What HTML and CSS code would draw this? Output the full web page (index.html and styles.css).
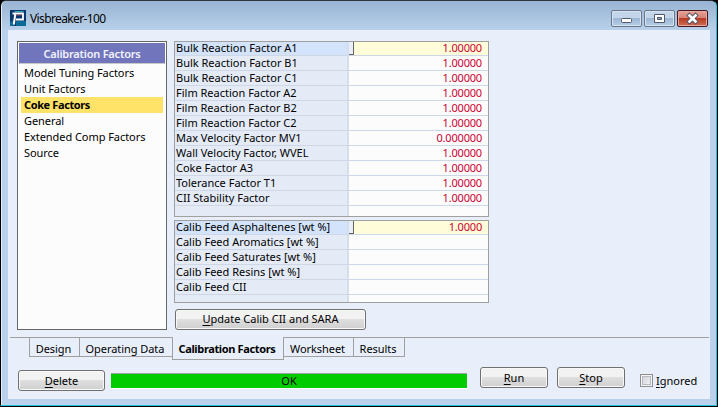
FILE: index.html
```html
<!DOCTYPE html>
<html lang="en">
<head>
<meta charset="utf-8">
<title>Visbreaker-100</title>
<link rel="stylesheet" href="styles.css">
</head>
<body>
<div class="window">
  <header class="titlebar">
    <svg class="logo" width="16" height="16" viewBox="0 0 16 16"><rect width="16" height="16" fill="#0c356c"/><path d="M0 12l4-2v6H0zM6 11h10v5H6z" fill="#0b6a98"/><path d="M4.500 1.500h9" stroke="#36a7b5"/><path d="M2.500 3.500h10.500v6H6" fill="none" stroke="#fff" stroke-width="1.800"/><path d="M5.300 4L3.800 14.500" stroke="#fff" stroke-width="2"/><path d="M6.500 5h5" stroke="#bd4c5a" stroke-width=".8"/></svg>
    <h1>Visbreaker-100</h1>
    <div class="controls">
      <span class="ctl"><svg width="29" height="15"><rect x="9.500" y="7.500" width="10" height="4" rx="1" fill="#fff" stroke="#535666"/></svg></span>
      <span class="ctl"><svg width="29" height="15"><path d="M9.500 3.500h10v8h-10z" fill="#fff" stroke="#535666"/><path d="M12.500 6.500h4v2h-4z" fill="#8faac8" stroke="#535666"/></svg></span>
      <span class="ctl close"><svg width="29" height="15"><path d="M11.500 4.500l6 6M17.500 4.500l-6 6" stroke="#535666" stroke-width="4.500" stroke-linecap="square"/><path d="M11.500 4.500l6 6M17.500 4.500l-6 6" stroke="#fff" stroke-width="2.600" stroke-linecap="square"/></svg></span>
    </div>
  </header>
  <main class="client">
    <section class="workspace">
      <nav class="side">
        <h2>Calibration Factors</h2>
        <ul>
          <li>Model Tuning Factors</li><li>Unit Factors</li><li class="selected">Coke Factors</li><li>General</li><li>Extended Comp Factors</li><li>Source</li>
        </ul>
      </nav>
      <div class="data">
        <table class="grid factors">
          <tr class="current"><th>Bulk Reaction Factor A1</th><td>1.00000</td></tr>
          <tr><th>Bulk Reaction Factor B1</th><td>1.00000</td></tr>
          <tr><th>Bulk Reaction Factor C1</th><td>1.00000</td></tr>
          <tr><th>Film Reaction Factor A2</th><td>1.00000</td></tr>
          <tr><th>Film Reaction Factor B2</th><td>1.00000</td></tr>
          <tr><th>Film Reaction Factor C2</th><td>1.00000</td></tr>
          <tr><th>Max Velocity Factor MV1</th><td>0.000000</td></tr>
          <tr><th>Wall Velocity Factor, WVEL</th><td>1.00000</td></tr>
          <tr><th>Coke Factor A3</th><td>1.00000</td></tr>
          <tr><th>Tolerance Factor T1</th><td>1.00000</td></tr>
          <tr><th>CII Stability Factor</th><td>1.00000</td></tr>
          <tr class="rest"><th></th><td></td></tr>
        </table>
        <table class="grid feed">
          <tr class="current"><th>Calib Feed Asphaltenes [wt %]</th><td>1.0000</td></tr>
          <tr><th>Calib Feed Aromatics [wt %]</th><td></td></tr>
          <tr><th>Calib Feed Saturates [wt %]</th><td></td></tr>
          <tr><th>Calib Feed Resins [wt %]</th><td></td></tr>
          <tr><th>Calib Feed CII</th><td></td></tr>
          <tr class="rest"><th></th><td></td></tr>
        </table>
        <button class="update"><span><u>U</u>pdate Calib CII and SARA</span></button>
      </div>
    </section>
    <nav class="tabs">
      <span class="lead"></span><span class="tab design">Design</span><span class="tab operating">Operating Data</span><span class="tab active">Calibration Factors</span><span class="tab worksheet">Worksheet</span><span class="tab results">Results</span><span class="tail"></span>
    </nav>
    <footer class="actions">
      <button class="delete"><span><u>D</u>elete</span></button>
      <div class="status">OK</div>
      <button class="run"><span><u>R</u>un</span></button>
      <button class="stop"><span><u>S</u>top</span></button>
      <label><i class="check"></i><span><u>I</u>gnored</span></label>
    </footer>
  </main>
</div>
</body>
</html>
```
FILE: styles.css
```css
* { box-sizing: border-box; }
body { margin: 0; width: 718px; height: 407px; overflow: hidden; background: #000; font: 11px/15px "Noto Sans", sans-serif; color: #000; }
h1, h2, ul { margin: 0; padding: 0; font: inherit; list-style: none; }
.window { width: 717px; height: 406px; padding: 0 6px 6px 7px; border: 1px solid #24c1df; border-top-color: #30343b; border-left-color: #000; border-radius: 6px 6px 0 0; background: linear-gradient(#98b4d2 0, #b9d1ea 30px, #b9d1ea); box-shadow: inset 1px 0 #e4edf7; }
.titlebar { height: 29px; display: flex; align-items: flex-start; }
.logo { margin: 9px 0 0 2px; }
h1 { margin: 9px 0 0 4px; font-size: 12px; line-height: 18px; letter-spacing: -.62px; }
.controls { margin: 9px 2px 0 auto; display: flex; gap: 2px; }
.ctl { width: 31px; height: 17px; border: 1px solid #6b7789; border-radius: 2px; background: linear-gradient(#c3d5e9 0 45%, #9eb7d2 50%, #b5cee8); box-shadow: inset 0 0 0 1px #d5e4f3; }
.ctl svg { display: block; }
.close { border-color: #491620; background: linear-gradient(#e7a297, #d68476 45%, #b93b26 50%, #cd6f50); box-shadow: inset 0 0 0 1px #e5aaa1; }
.client { height: 369px; background: #e8effa; }
.workspace { display: flex; height: 307px; padding: 11px 0 0 9px; }
.side { width: 150px; height: 289px; padding: 1px; border: 1px solid #666; background: #fcfcfc; }
.side h2 { height: 21px; border-bottom: 1px solid #c8c8c8; background: #7176bc; color: #f1f3ff; font-size: 11px; font-weight: 600; line-height: 22px; letter-spacing: -.22px; text-align: center; }
.side ul { padding: 1px 2px; }
.side li { height: 16px; padding-left: 3px; line-height: 16px; letter-spacing: -.06px; }
.side .selected { background: #ffe368; font-weight: 700; letter-spacing: -.38px; }
.data { margin-left: 7px; }
.grid { display: block; width: 315px; border: 1px solid #a0a0a0; border-spacing: 0; background: #fcfcfc; }
.grid tbody { display: block; }
.grid tr { display: grid; grid-template-columns: 174px 139px; height: 15px; }
.grid .current { height: 14px; }
.grid th { padding: 0 0 0 1px; border-right: 2px solid #d5dfec; border-bottom: 1px solid #cdd7e7; background: #e4ebf7; font-weight: 400; line-height: 14px; text-align: left; white-space: nowrap; }
.grid td { padding: 0 6px 0 0; border-bottom: 1px solid #cdd7e7; color: #cc0033; line-height: 14px; letter-spacing: -.18px; text-align: right; }
.grid .current th { background: #d2e3fb; line-height: 12px; }
.grid .current td { position: relative; background: #fffdd9; line-height: 12px; }
.current td::before { content: ""; position: absolute; left: 0; top: 0; width: 4px; height: 12px; border: solid #666; border-width: 0 1px 1px 0; background: #e8effa; }
.grid .rest { height: 10px; }
.grid .rest th, .grid .rest td { border-bottom: 0; }
.feed { margin-top: 3px; }
.feed .rest { height: 7px; }
button { display: block; padding: 0; border: 1px solid #707070; border-radius: 3px; background: linear-gradient(#f2f2f2 0 45%, #dfdfdf 50%, #cfcfcf); box-shadow: inset 0 0 0 1px #f8f8f8; font: inherit; }
u { text-decoration: underline; text-underline-offset: 2px; }
.update { width: 191px; height: 21px; margin: 6px 0 0 1px; line-height: 14px; }
.update span { position: relative; top: -1px; }
.tabs { display: flex; height: 23px; padding: 0 1px 0 2px; }
.lead { width: 19px; border-top: 1px solid #a0a0a0; }
.tab { height: 20px; padding-right: 2px; border: solid #a0a0a0; border-width: 1px 0 1px 1px; line-height: 22px; text-align: center; white-space: nowrap; letter-spacing: -.06px; }
.design { width: 50px; } .operating { width: 93px; }
.active { width: 112px; height: 23px; border-width: 0 1px 1px; font-weight: 700; line-height: 24px; letter-spacing: -.36px; }
.worksheet { width: 69px; border-left: 0; } .results { width: 52px; border-right-width: 1px; }
.tail { flex: 1; border-top: 1px solid #a0a0a0; }
.actions { display: flex; align-items: flex-start; padding: 7px 0 0 10px; }
.delete { width: 87px; height: 21px; margin-top: 3px; }
.status { width: 356px; height: 16px; margin: 6px 0 0 6px; border-top: 1px solid #a0a0a0; border-bottom: 1px solid #fff; background: #00cc00; line-height: 14px; text-align: center; }
.run { width: 68px; height: 21px; margin-left: 13px; }
.stop { width: 68px; height: 21px; margin-left: 9px; }
label { display: flex; margin: 7px 0 0 15px; line-height: 14px; }
.check { width: 13px; height: 13px; margin-right: 3px; border: 1px solid #8e8f8f; background: linear-gradient(135deg, #cbcfd5, #f6f6f6); box-shadow: inset 0 0 0 1px #f4f4f4, inset 0 0 0 2px #b5bac3; }
```
